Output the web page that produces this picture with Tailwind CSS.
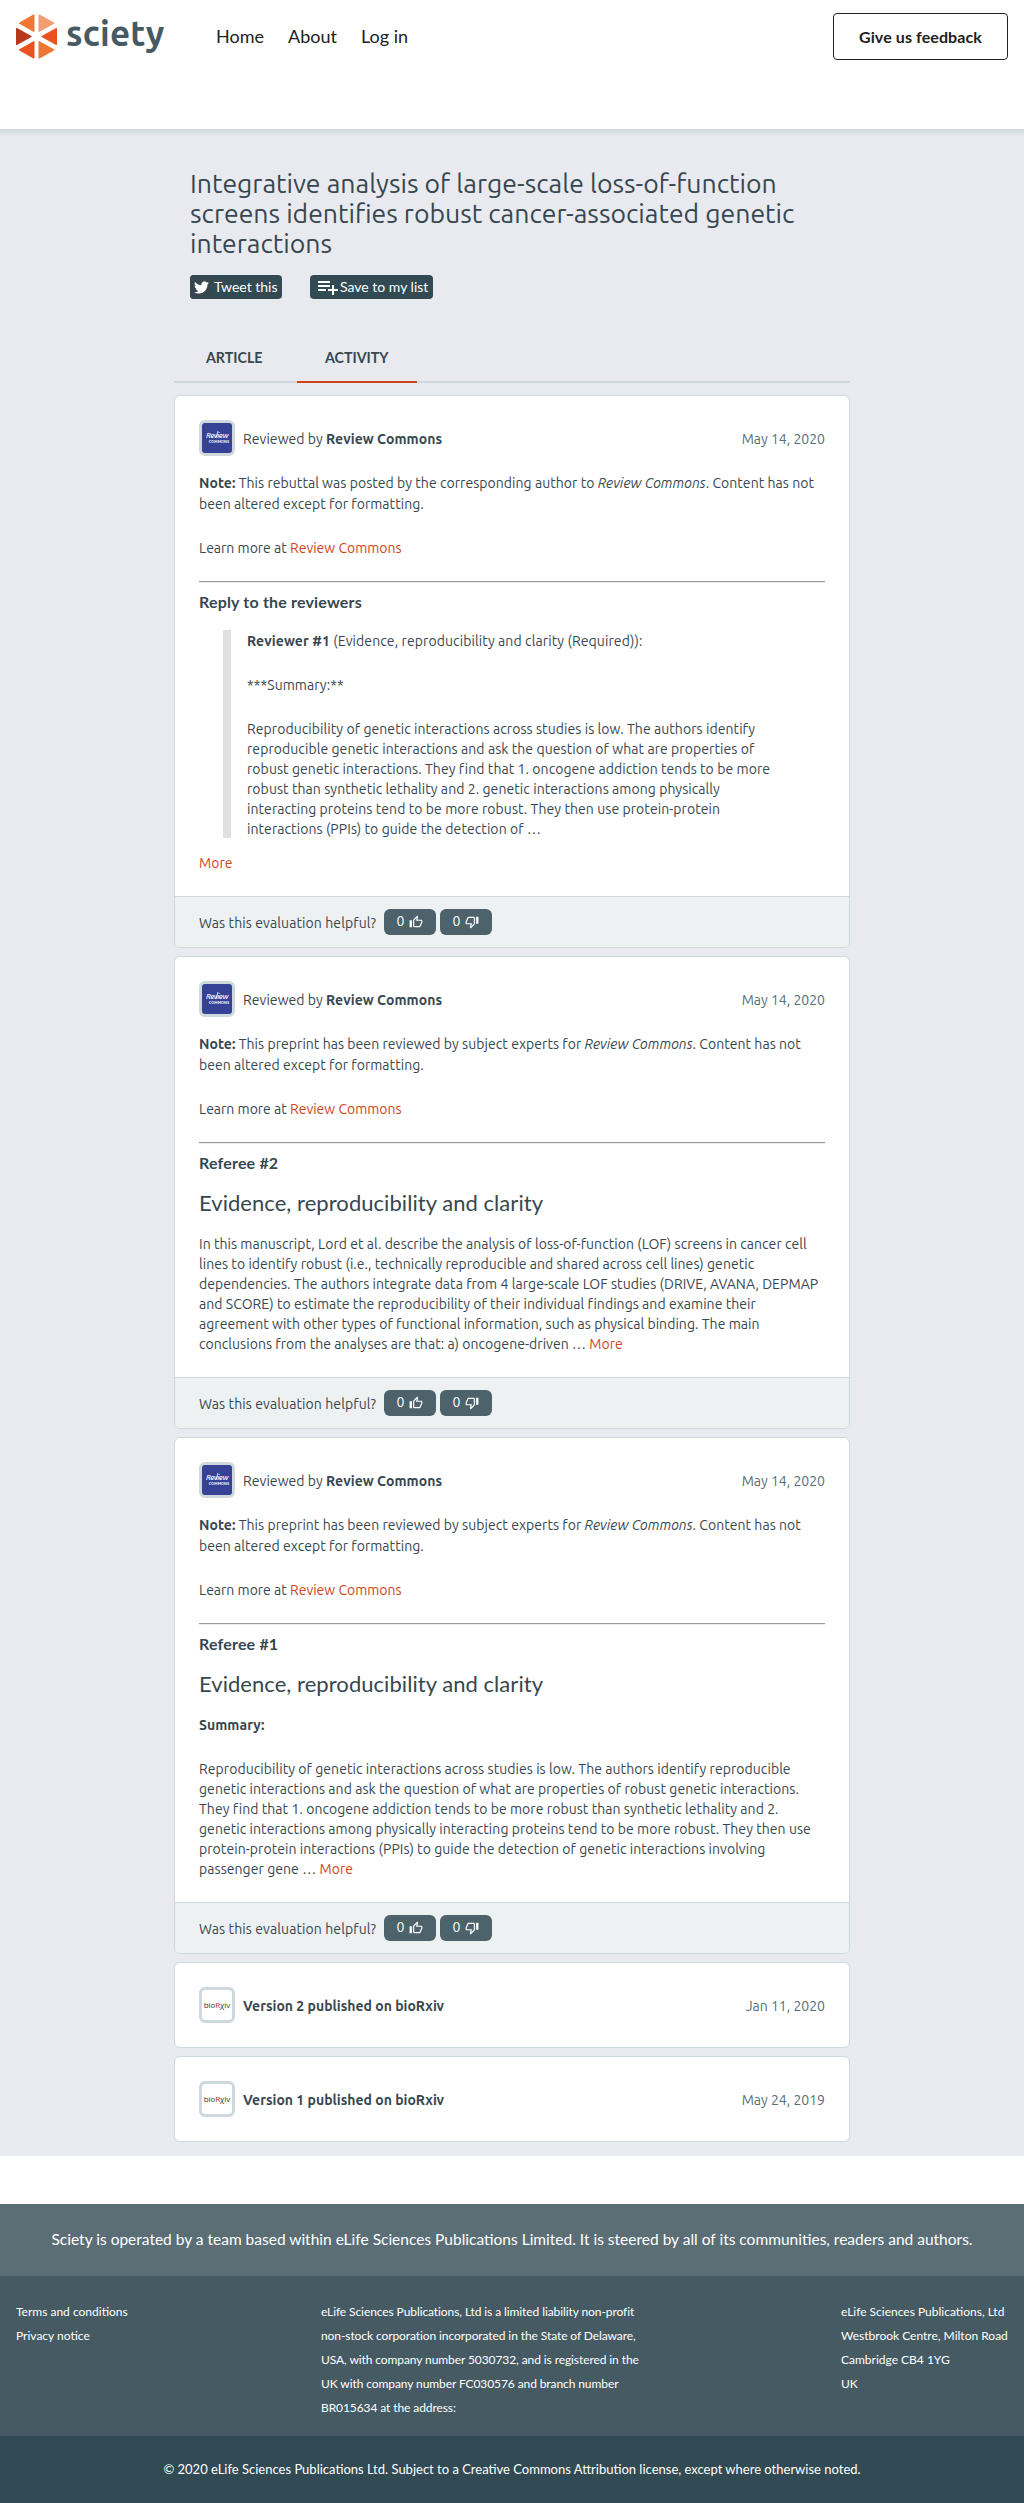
<!DOCTYPE html>
<html lang="en"><head><meta charset="utf-8"><title>Sciety</title>
<script src="https://cdn.jsdelivr.net/npm/@tailwindcss/browser@4"></script></head>
<body class="bg-white font-['Lato',sans-serif] text-[#37474f]">
<svg class="hidden"><defs>
<symbol id="thumb" viewBox="0 0 24 24"><path d="M9 21h9c.83 0 1.54-.5 1.84-1.22l3.02-7.05c.09-.23.14-.47.14-.73v-2c0-1.1-.9-2-2-2h-6.31l.95-4.57.03-.32c0-.41-.17-.79-.44-1.06L14.17 1 7.58 7.59C7.22 7.95 7 8.45 7 9v10c0 1.1.9 2 2 2zM9 9l4.34-4.34L12 10h9v2l-3 7H9V9zM1 9h4v12H1z"/></symbol>
</defs></svg>
<header class="h-[129px] bg-white flex items-start pl-4 pr-4 text-[#212121]">
<a class="flex items-start w-[200px] pt-[14px]">
<svg class="w-[41px] h-[45px]" viewBox="0 0 41 45" stroke-width="1.4" stroke-linejoin="round">
<path d="M3.7 9.2 17.8 1.2V17.2Z" fill="#ee7733" stroke="#ee7733"/>
<path d="M23.2 1.2 37.6 9.2 23.2 17.2Z" fill="#f49c72" stroke="#f49c72"/>
<path d="M.7 14.7 15 22.5.7 30.3Z" fill="#b7381a" stroke="#b7381a"/>
<path d="M40.4 14.7V30.3L26 22.5Z" fill="#e9531f" stroke="#e9531f"/>
<path d="M3.7 35.8 17.8 27.8V43.8Z" fill="#e9531f" stroke="#e9531f"/>
<path d="M23.2 27.8 37.6 35.8 23.2 43.8Z" fill="#ee7733" stroke="#ee7733"/>
</svg>
<span class="ml-[9px] mt-[-1px] leading-[40px] font-['Ubuntu',sans-serif] font-bold text-[35px] tracking-[0.15px] text-[#465a63]">sciety</span></a>
<nav class="flex gap-6 pt-[22px] text-[18px] leading-[28px]"><a>Home</a><a>About</a><a>Log in</a></nav>
<a class="ml-auto mt-[13px] w-[175px] h-[47px] border border-[#212121] rounded flex items-center justify-center font-bold text-base tracking-[0.1px]">Give us feedback</a>
</header>
<main class="bg-[#e8eaef] h-[2027px]">
<div class="h-2 bg-linear-to-b from-[#cfd8dc] to-[#e8eaef]"></div>
<div class="w-[676px] ml-[174px] pt-[31px]">
<div class="px-4"><h1 class="font-['Ubuntu',sans-serif] text-[26.6px] leading-[30px] whitespace-nowrap">Integrative analysis of large-scale loss-of-function<br>screens identifies robust cancer-associated genetic<br>interactions</h1>
<div class="flex gap-7 mt-[17px] text-[14px] leading-6 text-white">
<a class="flex h-6 w-[92px] rounded bg-[#314a53]"><span class="w-[22px] bg-[#37474f] rounded-l flex items-center justify-center"><svg class="w-[15px] h-[15px]" viewBox="0 0 24 24" fill="#fff"><path d="M23.953 4.57a10 10 0 01-2.825.775 4.958 4.958 0 002.163-2.723c-.951.555-2.005.959-3.127 1.184a4.92 4.92 0 00-8.384 4.482C7.69 8.095 4.067 6.13 1.64 3.162a4.822 4.822 0 00-.666 2.475c0 1.71.87 3.213 2.188 4.096a4.904 4.904 0 01-2.228-.616v.06a4.923 4.923 0 003.946 4.827 4.996 4.996 0 01-2.212.085 4.936 4.936 0 004.604 3.417 9.867 9.867 0 01-6.102 2.105c-.39 0-.779-.023-1.17-.067a13.995 13.995 0 007.557 2.209c9.053 0 13.998-7.496 13.998-13.985 0-.21 0-.42-.015-.63A9.935 9.935 0 0024 4.59z"/></svg></span><span class="ml-[2px]">Tweet this</span></a>
<a class="flex h-6 w-[123px] pl-[6px] rounded bg-[#314a53]"><svg class="w-6 h-6" viewBox="0 0 24 24" fill="#fff"><path d="M14 10H2v2h12v-2zm0-4H2v2h12V6zm4 8v-4h-2v4h-4v2h4v4h2v-4h4v-2h-4zM2 16h8v-2H2v2z"/></svg><span>Save to my list</span></a>
</div></div>
<div class="mt-[34px] h-[50px] flex border-b-2 border-[#cfd8dc] font-bold text-[14.22px] leading-[50px]"><a class="w-[123px] pl-8">ARTICLE</a><a class="w-[120px] h-[50px] border-b-2 border-[#cf4519] pl-7">ACTIVITY</a></div>
<div class="mt-3 flex flex-col gap-2 font-['Ubuntu',sans-serif] text-[14px] tracking-[0.05px] leading-5 whitespace-nowrap">

<article class="border border-[#cfd8dc] rounded-md bg-white overflow-hidden">
<div class="px-6 pt-6 pb-[23px]">
<div class="flex items-center h-9"><span class="relative w-9 h-9 border-[3px] border-[#cfd8dc] rounded-md bg-[#364296] text-white flex flex-col items-center justify-center"><span class="text-[7.5px] leading-[7px] italic font-medium tracking-[-0.3px]">Review</span><span class="text-[3.8px] leading-[5px] font-bold ml-1">COMMONS</span><svg class="absolute left-[13px] top-[7px] w-1 h-2" viewBox="0 0 4 8" stroke="#fff" stroke-width=".8"><path d="M1 8 3 1"/></svg></span><span class="ml-2 pt-px">Reviewed by <b>Review Commons</b></span><time class="ml-auto pt-px tracking-normal text-[#546e7a]">May 14, 2020</time></div>
<p class="mt-[17px] leading-[21px]"><b>Note:</b> This rebuttal was posted by the corresponding author to <i>Review Commons</i>. Content has not<br>been altered except for formatting.</p>
<p class="mt-[23px] leading-[21px] tracking-normal">Learn more at <a class="text-[#cf4519]">Review Commons</a></p>
<div class="mt-[22px] h-[2px] bg-[#eee] border-t border-[#9a9a9a]"></div>
<h3 class="mt-[9px] font-['Lato',sans-serif] font-bold text-[16px] tracking-[0.18px] leading-5">Reply to the reviewers</h3>
<blockquote class="mt-[18px] ml-6 pl-4 pt-px h-[208px] border-l-8 border-[#e0e0e0]"><p class="tracking-[0.1px]"><b>Reviewer #1</b> (Evidence, reproducibility and clarity (Required)):</p><p class="mt-6">***Summary:**</p><p class="mt-6 tracking-[0.07px]">Reproducibility of genetic interactions across studies is low. The authors identify<br>reproducible genetic interactions and ask the question of what are properties of<br>robust genetic interactions. They find that 1. oncogene addiction tends to be more<br>robust than synthetic lethality and 2. genetic interactions among physically<br>interacting proteins tend to be more robust. They then use protein-protein<br>interactions (PPIs) to guide the detection of …</p></blockquote>
<p class="mt-[15px] text-[#cf4519]">More</p>
</div>
<div class="flex items-center h-[51px] px-6 border-t border-[#cfd8dc] bg-[#edf1f2]"><span class="w-[185px] pt-px tracking-[0.1px]">Was this evaluation helpful?</span><span class="w-[52px] h-[26px] rounded-md bg-[#4d626b] text-white flex items-center justify-center gap-[5px]"><span class="pb-0.5">0</span><svg class="w-[14px] h-[14px] fill-white"><use href="#thumb"/></svg></span><span class="ml-1 w-[52px] h-[26px] rounded-md bg-[#4d626b] text-white flex items-center justify-center gap-[5px]"><span class="pb-0.5">0</span><svg class="w-[14px] h-[14px] fill-white rotate-180"><use href="#thumb"/></svg></span></div>
</article>

<article class="border border-[#cfd8dc] rounded-md bg-white overflow-hidden">
<div class="px-6 pt-6 pb-[23px]">
<div class="flex items-center h-9"><span class="relative w-9 h-9 border-[3px] border-[#cfd8dc] rounded-md bg-[#364296] text-white flex flex-col items-center justify-center"><span class="text-[7.5px] leading-[7px] italic font-medium tracking-[-0.3px]">Review</span><span class="text-[3.8px] leading-[5px] font-bold ml-1">COMMONS</span><svg class="absolute left-[13px] top-[7px] w-1 h-2" viewBox="0 0 4 8" stroke="#fff" stroke-width=".8"><path d="M1 8 3 1"/></svg></span><span class="ml-2 pt-px">Reviewed by <b>Review Commons</b></span><time class="ml-auto pt-px tracking-normal text-[#546e7a]">May 14, 2020</time></div>
<p class="mt-[17px] leading-[21px]"><b>Note:</b> This preprint has been reviewed by subject experts for <i>Review Commons</i>. Content has not<br>been altered except for formatting.</p>
<p class="mt-[23px] leading-[21px] tracking-normal">Learn more at <a class="text-[#cf4519]">Review Commons</a></p>
<div class="mt-[22px] h-[2px] bg-[#eee] border-t border-[#9a9a9a]"></div>
<h3 class="mt-[9px] font-['Lato',sans-serif] font-bold text-[16px] tracking-[0.18px] leading-5">Referee #2</h3>
<h2 class="mt-4 font-['Lato',sans-serif] text-[22px] leading-7">Evidence, reproducibility and clarity</h2>
<p class="mt-[17px]">In this manuscript, Lord et al. describe the analysis of loss-of-function (LOF) screens in cancer cell<br>lines to identify robust (i.e., technically reproducible and shared across cell lines) genetic<br>dependencies. The authors integrate data from 4 large-scale LOF studies (DRIVE, AVANA, DEPMAP<br>and SCORE) to estimate the reproducibility of their individual findings and examine their<br>agreement with other types of functional information, such as physical binding. The main<br>conclusions from the analyses are that: a) oncogene-driven … <a class="text-[#cf4519]">More</a></p>
</div>
<div class="flex items-center h-[51px] px-6 border-t border-[#cfd8dc] bg-[#edf1f2]"><span class="w-[185px] pt-px tracking-[0.1px]">Was this evaluation helpful?</span><span class="w-[52px] h-[26px] rounded-md bg-[#4d626b] text-white flex items-center justify-center gap-[5px]"><span class="pb-0.5">0</span><svg class="w-[14px] h-[14px] fill-white"><use href="#thumb"/></svg></span><span class="ml-1 w-[52px] h-[26px] rounded-md bg-[#4d626b] text-white flex items-center justify-center gap-[5px]"><span class="pb-0.5">0</span><svg class="w-[14px] h-[14px] fill-white rotate-180"><use href="#thumb"/></svg></span></div>
</article>

<article class="border border-[#cfd8dc] rounded-md bg-white overflow-hidden">
<div class="px-6 pt-6 pb-[23px]">
<div class="flex items-center h-9"><span class="relative w-9 h-9 border-[3px] border-[#cfd8dc] rounded-md bg-[#364296] text-white flex flex-col items-center justify-center"><span class="text-[7.5px] leading-[7px] italic font-medium tracking-[-0.3px]">Review</span><span class="text-[3.8px] leading-[5px] font-bold ml-1">COMMONS</span><svg class="absolute left-[13px] top-[7px] w-1 h-2" viewBox="0 0 4 8" stroke="#fff" stroke-width=".8"><path d="M1 8 3 1"/></svg></span><span class="ml-2 pt-px">Reviewed by <b>Review Commons</b></span><time class="ml-auto pt-px tracking-normal text-[#546e7a]">May 14, 2020</time></div>
<p class="mt-[17px] leading-[21px]"><b>Note:</b> This preprint has been reviewed by subject experts for <i>Review Commons</i>. Content has not<br>been altered except for formatting.</p>
<p class="mt-[23px] leading-[21px] tracking-normal">Learn more at <a class="text-[#cf4519]">Review Commons</a></p>
<div class="mt-[22px] h-[2px] bg-[#eee] border-t border-[#9a9a9a]"></div>
<h3 class="mt-[9px] font-['Lato',sans-serif] font-bold text-[16px] tracking-[0.18px] leading-5">Referee #1</h3>
<h2 class="mt-4 font-['Lato',sans-serif] text-[22px] leading-7">Evidence, reproducibility and clarity</h2>
<p class="mt-[17px] font-bold">Summary:</p>
<p class="mt-6 tracking-[0.06px]">Reproducibility of genetic interactions across studies is low. The authors identify reproducible<br>genetic interactions and ask the question of what are properties of robust genetic interactions.<br>They find that 1. oncogene addiction tends to be more robust than synthetic lethality and 2.<br>genetic interactions among physically interacting proteins tend to be more robust. They then use<br>protein-protein interactions (PPIs) to guide the detection of genetic interactions involving<br>passenger gene … <a class="text-[#cf4519]">More</a></p>
</div>
<div class="flex items-center h-[51px] px-6 border-t border-[#cfd8dc] bg-[#edf1f2]"><span class="w-[185px] pt-px tracking-[0.1px]">Was this evaluation helpful?</span><span class="w-[52px] h-[26px] rounded-md bg-[#4d626b] text-white flex items-center justify-center gap-[5px]"><span class="pb-0.5">0</span><svg class="w-[14px] h-[14px] fill-white"><use href="#thumb"/></svg></span><span class="ml-1 w-[52px] h-[26px] rounded-md bg-[#4d626b] text-white flex items-center justify-center gap-[5px]"><span class="pb-0.5">0</span><svg class="w-[14px] h-[14px] fill-white rotate-180"><use href="#thumb"/></svg></span></div>
</article>

<article class="border border-[#cfd8dc] rounded-md bg-white flex items-center p-6 tracking-normal"><span class="w-9 h-9 border-[3px] border-[#cfd8dc] rounded-md font-['Open_Sans',sans-serif] text-[8px] tracking-[-0.1px] leading-[30px] text-[#333] flex justify-center">bio<span class="text-[#bd2736]">R</span>χiv</span><b class="ml-2 pt-px">Version 2 published on bioRxiv</b><time class="ml-auto pt-px text-[#546e7a]">Jan 11, 2020</time></article>
<article class="border border-[#cfd8dc] rounded-md bg-white flex items-center p-6 tracking-normal"><span class="w-9 h-9 border-[3px] border-[#cfd8dc] rounded-md font-['Open_Sans',sans-serif] text-[8px] tracking-[-0.1px] leading-[30px] text-[#333] flex justify-center">bio<span class="text-[#bd2736]">R</span>χiv</span><b class="ml-2 pt-px">Version 1 published on bioRxiv</b><time class="ml-auto pt-px text-[#546e7a]">May 24, 2019</time></article>
</div></div></main>
<footer class="mt-12 text-white whitespace-nowrap">
<div class="h-[72px] bg-[#5b6e75] flex items-center justify-center text-[15.5px]">Sciety is operated by a team based within eLife Sciences Publications Limited. It is steered by all of its communities, readers and authors.</div>
<div class="h-[160px] bg-[#465a63] px-4 pt-6 flex text-[12px] leading-6"><div class="w-[305px]">Terms and conditions<br>Privacy notice</div><div class="w-[520px] tracking-[-0.09px]">eLife Sciences Publications, Ltd is a limited liability non-profit<br>non-stock corporation incorporated in the State of Delaware,<br>USA, with company number 5030732, and is registered in the<br>UK with company number FC030576 and branch number<br>BR015634 at the address:</div><div>eLife Sciences Publications, Ltd<br>Westbrook Centre, Milton Road<br>Cambridge CB4 1YG<br>UK</div></div>
<div class="h-[67px] bg-[#314a53] flex items-center justify-center text-[13px]">© 2020 eLife Sciences Publications Ltd. Subject to a Creative Commons Attribution license, except where otherwise noted.</div>
</footer>
</body></html>
